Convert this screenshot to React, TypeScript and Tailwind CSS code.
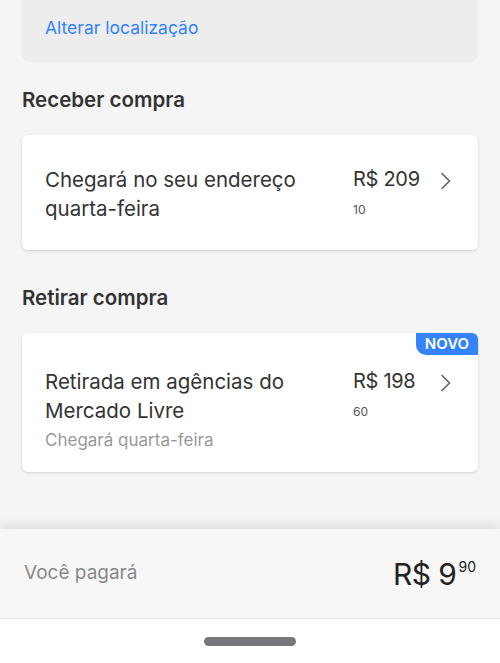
interface OptionProps {
  title: string;
  price: string;
  cents: string;
  subtitle?: string;
  badge?: string;
}

const Chevron = () => (
  <svg width="12" height="18" viewBox="0 0 12 18" fill="none" className="mt-[7px]">
    <path d="M2 1.5 L9.5 9 L2 16.5" stroke="#666" strokeWidth="1.7" strokeLinecap="round" strokeLinejoin="round" />
  </svg>
);

const Option = ({ title, price, cents, subtitle, badge }: OptionProps) => (
  <div className="relative mx-[22px] rounded-md bg-white shadow-[0_1px_3px_rgba(0,0,0,0.15)]">
    {badge && (
      <span className="absolute right-0 top-0 rounded-bl-[10px] rounded-tr-md bg-[#3483fa] px-[9px] pb-[2px] pt-[1px] text-[15px] font-semibold leading-[19px] text-white">
        {badge}
      </span>
    )}
    <div className={`flex pl-[23px] pr-[26px] ${subtitle ? "pb-[19px] pt-[34px]" : "pb-[27px] pt-[30px]"}`}>
      <div className="flex-1">
        <p className="text-[20.5px] leading-[29px] text-[#333]">{title}</p>
        {subtitle && <p className="mt-[2px] text-[17px] leading-[26px] text-[#999]">{subtitle}</p>}
      </div>
      <div className="flex w-[99px] items-start justify-between">
        <div>
          <p className="text-[20px] leading-[29px] tracking-[-0.3px] text-[#333]">{price}</p>
          <p className="mt-[8px] text-[12px] leading-[15px] text-[#555]">{cents}</p>
        </div>
        <Chevron />
      </div>
    </div>
  </div>
);

export default function App() {
  return (
    <div className="flex h-[663px] w-[500px] flex-col overflow-hidden bg-[#f5f5f5] font-['Inter',sans-serif]">
      <div className="flex-1 overflow-hidden">
        <div className="mx-[22px] flex h-[62px] items-start rounded-b-lg bg-[#ededed] px-[23px] pt-[16px]">
          <span className="text-[17.5px] leading-[24px] text-[#3483fa]">Alterar localização</span>
        </div>

        <h2 className="mx-[22px] mt-[26px] text-[20.5px] font-semibold leading-[24px] text-[#333]">Receber compra</h2>
        <div className="mt-[23px]">
          <Option title="Chegará no seu endereço quarta-feira" price="R$ 209" cents="10" />
        </div>

        <h2 className="mx-[22px] mt-[36px] text-[20.5px] font-semibold leading-[24px] text-[#333]">Retirar compra</h2>
        <div className="mt-[23px]">
          <Option
            title="Retirada em agências do Mercado Livre"
            price="R$ 198"
            cents="60"
            subtitle="Chegará quarta-feira"
            badge="NOVO"
          />
        </div>
      </div>

      <div className="flex h-[90px] items-center justify-between border-b border-[#e6e6e6] bg-[#f7f7f7] pl-[24px] pr-[24px] shadow-[0_-4px_10px_rgba(0,0,0,0.1)]">
        <span className="text-[19px] text-[#888]">Você pagará</span>
        <span className="flex items-start text-[#222]">
          <span className="text-[30px] leading-[34px] tracking-[-0.5px]">R$ 9</span>
          <span className="ml-[2px] mt-[2px] text-[14px] leading-[16px]">90</span>
        </span>
      </div>

      <div className="flex h-[44px] items-center justify-center bg-white">
        <div className="h-[9px] w-[92px] rounded-full bg-[#75777a]" />
      </div>
    </div>
  );
}
